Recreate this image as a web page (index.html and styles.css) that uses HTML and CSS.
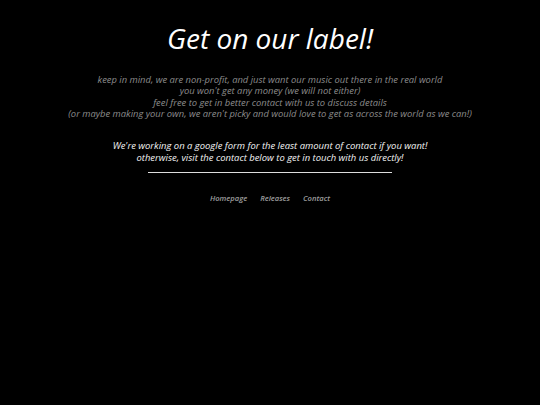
FILE: index.html
```html
<!DOCTYPE html>
<html>
<head>
<meta charset="utf-8">
<link rel="stylesheet" href="styles.css">
</head>
<body>
<main class="page">
  <h1 class="title">Get on our label!</h1>
  <div class="info">
    <p>keep in mind, we are non-profit, and just want our music out there in the real world</p>
    <p>you won't get any money (we will not either)</p>
    <p>feel free to get in better contact with us to discuss details</p>
    <p>(or maybe making your own, we aren't picky and would love to get as across the world as we can!)</p>
  </div>
  <div class="notice">
    <p>We're working on a google form for the least amount of contact if you want!</p>
    <p>otherwise, visit the contact below to get in touch with us directly!</p>
  </div>
  <hr class="rule">
  <nav class="nav">
    <a href="#">Homepage</a>
    <a href="#">Releases</a>
    <a href="#">Contact</a>
  </nav>
</main>
</body>
</html>
```
FILE: styles.css
```css
html, body {
  margin: 0;
  padding: 0;
  background: #000;
}
body {
  font-family: "Open Sans", "DejaVu Sans", sans-serif;
  font-style: italic;
  width: 540px;
  height: 405px;
}
.page {
  display: flex;
  flex-direction: column;
  align-items: center;
  text-align: center;
}
.title {
  margin: 20px 0 0;
  font-size: 28px;
  line-height: 36px;
  font-weight: 500;
  color: #fff;
}
.info {
  margin-top: 18px;
  color: #8c8c8c;
  font-size: 9.4px;
  line-height: 11.3px;
}
.info p, .notice p {
  margin: 0;
}
.notice {
  margin-top: 21px;
  color: #f4f4f4;
  font-size: 9.45px;
  line-height: 11.6px;
}
.rule {
  width: 244px;
  margin: 9px 0 0;
  border: 0;
  border-top: 1px solid #ddd;
  height: 0;
}
.nav {
  margin-top: 20px;
  display: flex;
  gap: 13px;
  font-size: 7.6px;
  font-weight: 600;
}
.nav a {
  color: #9e9e9e;
  text-decoration: none;
}
```
